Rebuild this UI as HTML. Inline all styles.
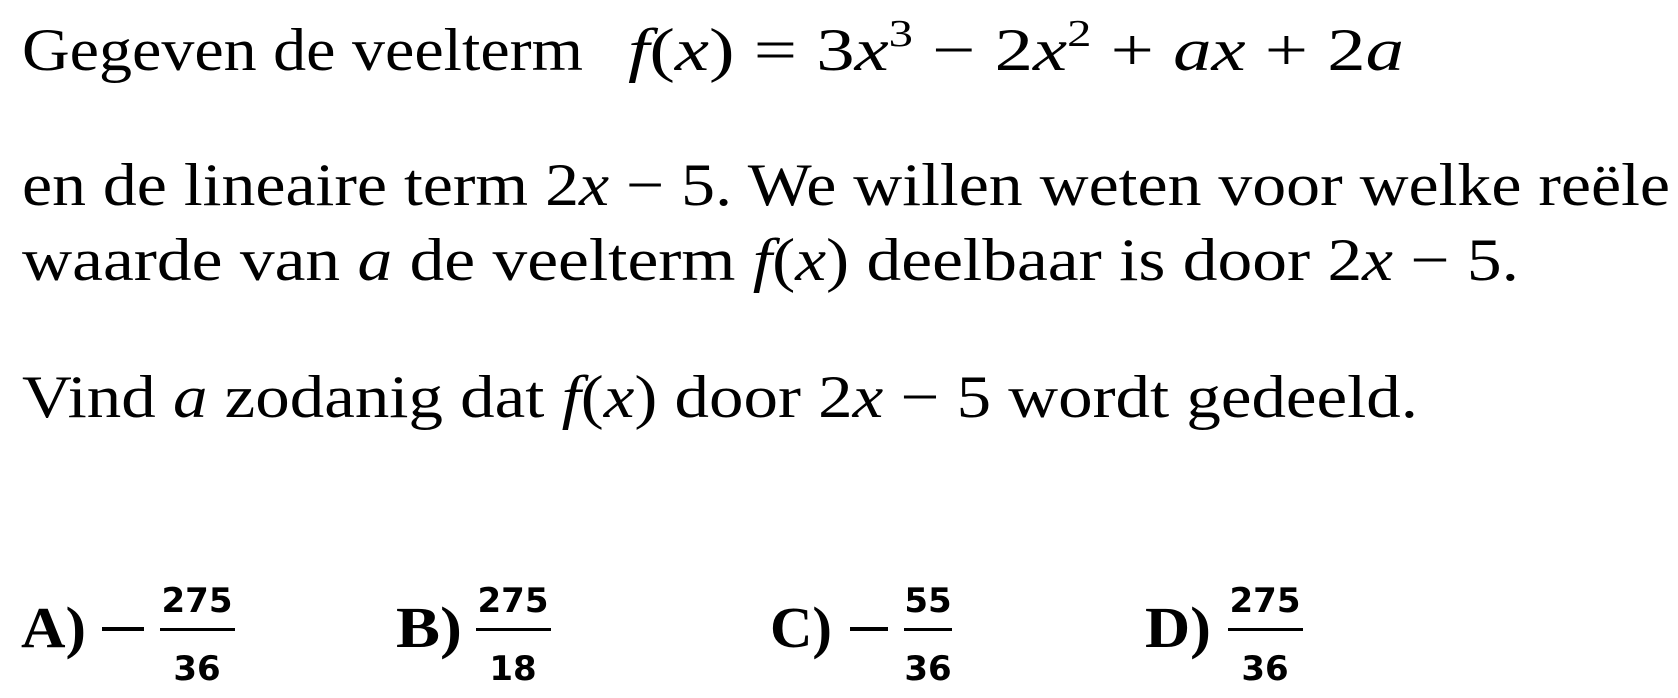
<!DOCTYPE html>
<html><head><meta charset="utf-8"><style>
html,body{margin:0;padding:0;background:#fff;width:1678px;height:698px;overflow:hidden}
svg{display:block}
text{font-family:"Liberation Serif",serif;fill:#000}
.m{font-family:"Liberation Serif",serif;font-style:italic}
.s{font-family:"DejaVu Sans","Liberation Sans",sans-serif;font-weight:bold}
</style></head><body>
<svg width="1678" height="698" viewBox="0 0 1678 698" xmlns="http://www.w3.org/2000/svg">
<g font-size="60">
<text x="22" y="70" textLength="561" lengthAdjust="spacingAndGlyphs">Gegeven de veelterm</text>
<text x="628" y="70" textLength="776" lengthAdjust="spacingAndGlyphs"><tspan class="m">f</tspan>(<tspan class="m">x</tspan>) = 3<tspan class="m">x</tspan><tspan font-size="38" dy="-24">3</tspan><tspan dy="24"> − 2</tspan><tspan class="m">x</tspan><tspan font-size="38" dy="-24">2</tspan><tspan dy="24"> + </tspan><tspan class="m">ax</tspan> + 2<tspan class="m">a</tspan></text>
<text x="22" y="205" textLength="1648" lengthAdjust="spacingAndGlyphs">en de lineaire term 2<tspan class="m">x</tspan> − 5. We willen weten voor welke reële</text>
<text x="22" y="280" textLength="1497" lengthAdjust="spacingAndGlyphs">waarde van <tspan class="m">a</tspan> de veelterm <tspan class="m">f</tspan>(<tspan class="m">x</tspan>) deelbaar is door 2<tspan class="m">x</tspan> − 5.</text>
<text x="22" y="417" textLength="1396" lengthAdjust="spacingAndGlyphs">Vind <tspan class="m">a</tspan> zodanig dat <tspan class="m">f</tspan>(<tspan class="m">x</tspan>) door 2<tspan class="m">x</tspan> − 5 wordt gedeeld.</text>
</g>
<g font-size="58" font-weight="bold">
<text x="21" y="647" textLength="65" lengthAdjust="spacingAndGlyphs">A)</text>
<text x="396" y="647" textLength="66" lengthAdjust="spacingAndGlyphs">B)</text>
<text x="770" y="647" textLength="62" lengthAdjust="spacingAndGlyphs">C)</text>
<text x="1145" y="647" textLength="66" lengthAdjust="spacingAndGlyphs">D)</text>
</g>
<rect x="102" y="627" width="42" height="4"/>
<rect x="850" y="627" width="38" height="4"/>
<g font-size="34" text-anchor="middle" class="s">
<text class="s" x="197" y="612">275</text><rect x="160" y="628" width="75" height="3"/><text class="s" x="197" y="680">36</text>
<text class="s" x="513" y="612">275</text><rect x="476" y="628" width="75" height="3"/><text class="s" x="513" y="680">18</text>
<text class="s" x="928" y="612">55</text><rect x="904" y="628" width="48" height="3"/><text class="s" x="928" y="680">36</text>
<text class="s" x="1265" y="612">275</text><rect x="1228" y="628" width="75" height="3"/><text class="s" x="1265" y="680">36</text>
</g>
</svg>
</body></html>
